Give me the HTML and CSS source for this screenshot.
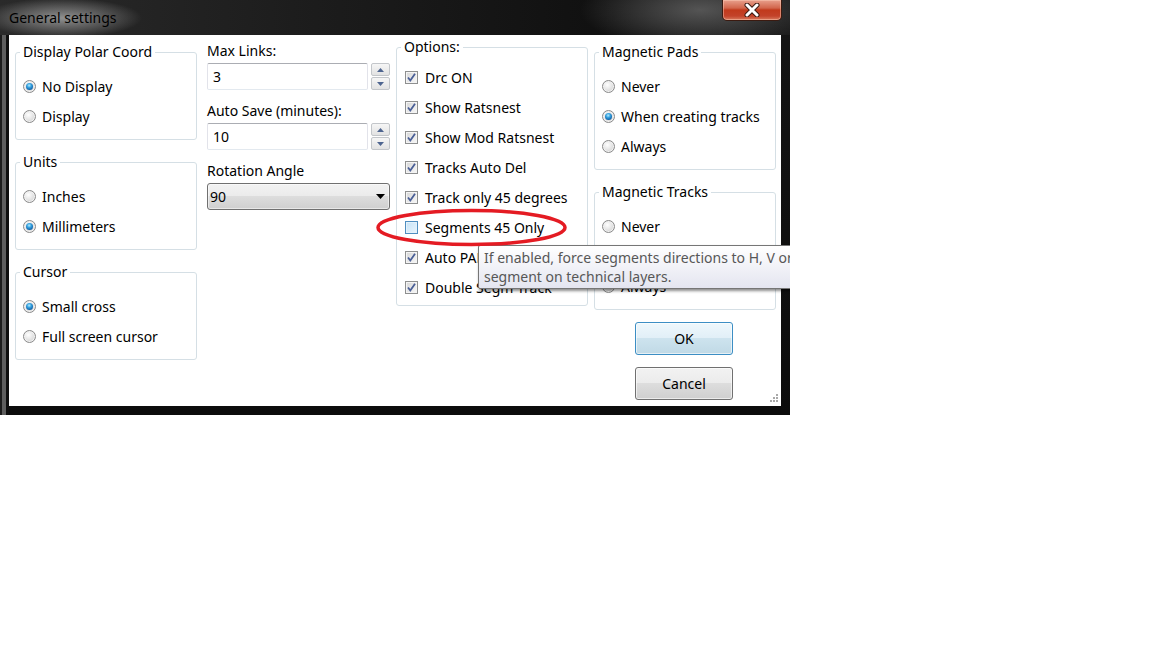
FILE: index.html
```html
<!DOCTYPE html>
<html>
<head>
<meta charset="utf-8">
<link rel="stylesheet" href="styles.css">
</head>
<body>
<div class="stage">
  <div class="window">
    <div class="titlebar">
      <span class="title">General settings</span>
      <div class="close">
        <svg width="20" height="14" viewBox="0 0 20 14"><path d="M5 2 L15 12 M15 2 L5 12" stroke="#3a1a12" stroke-width="5" stroke-linecap="round"/><path d="M5 2 L15 12 M15 2 L5 12" stroke="#fff" stroke-width="3" stroke-linecap="round"/></svg>
      </div>
    </div>
    <div class="client">
      <div class="col col1">
        <fieldset class="group">
          <legend>Display Polar Coord</legend>
          <div class="row"><span class="radio on"></span><span>No Display</span></div>
          <div class="row"><span class="radio"></span><span>Display</span></div>
        </fieldset>
        <fieldset class="group">
          <legend>Units</legend>
          <div class="row"><span class="radio"></span><span>Inches</span></div>
          <div class="row"><span class="radio on"></span><span>Millimeters</span></div>
        </fieldset>
        <fieldset class="group">
          <legend>Cursor</legend>
          <div class="row"><span class="radio on"></span><span>Small cross</span></div>
          <div class="row"><span class="radio"></span><span>Full screen cursor</span></div>
        </fieldset>
      </div>

      <div class="col col2">
        <div class="field">
          <div class="lbl">Max Links:</div>
          <div class="spinrow">
            <div class="input">3</div>
            <div class="spin">
              <div class="sb"><svg width="7" height="4" viewBox="0 0 7 4"><path d="M0 4 L3.5 0 L7 4Z" fill="#4e6590"/></svg></div>
              <div class="sb"><svg width="7" height="4" viewBox="0 0 7 4"><path d="M0 0 L3.5 4 L7 0Z" fill="#4e6590"/></svg></div>
            </div>
          </div>
        </div>
        <div class="field">
          <div class="lbl">Auto Save (minutes):</div>
          <div class="spinrow">
            <div class="input">10</div>
            <div class="spin">
              <div class="sb"><svg width="7" height="4" viewBox="0 0 7 4"><path d="M0 4 L3.5 0 L7 4Z" fill="#4e6590"/></svg></div>
              <div class="sb"><svg width="7" height="4" viewBox="0 0 7 4"><path d="M0 0 L3.5 4 L7 0Z" fill="#4e6590"/></svg></div>
            </div>
          </div>
        </div>
        <div class="field">
          <div class="lbl">Rotation Angle</div>
          <div class="select">
            <span>90</span>
            <svg width="9" height="5" viewBox="0 0 9 5"><path d="M0 0 L9 0 L4.5 5Z" fill="#000"/></svg>
          </div>
        </div>
      </div>

      <div class="col col3">
        <fieldset class="group opts">
          <legend>Options:</legend>
          <div class="row"><span class="check on"><svg width="11" height="11" viewBox="0 0 11 11"><path d="M2 5.5 L4.3 8.5 L9 1.8" stroke="#4a5f97" stroke-width="1.8" fill="none"/></svg></span><span>Drc ON</span></div>
          <div class="row"><span class="check on"><svg width="11" height="11" viewBox="0 0 11 11"><path d="M2 5.5 L4.3 8.5 L9 1.8" stroke="#4a5f97" stroke-width="1.8" fill="none"/></svg></span><span>Show Ratsnest</span></div>
          <div class="row"><span class="check on"><svg width="11" height="11" viewBox="0 0 11 11"><path d="M2 5.5 L4.3 8.5 L9 1.8" stroke="#4a5f97" stroke-width="1.8" fill="none"/></svg></span><span>Show Mod Ratsnest</span></div>
          <div class="row"><span class="check on"><svg width="11" height="11" viewBox="0 0 11 11"><path d="M2 5.5 L4.3 8.5 L9 1.8" stroke="#4a5f97" stroke-width="1.8" fill="none"/></svg></span><span>Tracks Auto Del</span></div>
          <div class="row"><span class="check on"><svg width="11" height="11" viewBox="0 0 11 11"><path d="M2 5.5 L4.3 8.5 L9 1.8" stroke="#4a5f97" stroke-width="1.8" fill="none"/></svg></span><span>Track only 45 degrees</span></div>
          <div class="row"><span class="check hover"></span><span>Segments 45 Only</span></div>
          <div class="row"><span class="check on"><svg width="11" height="11" viewBox="0 0 11 11"><path d="M2 5.5 L4.3 8.5 L9 1.8" stroke="#4a5f97" stroke-width="1.8" fill="none"/></svg></span><span>Auto PAN</span></div>
          <div class="row"><span class="check on"><svg width="11" height="11" viewBox="0 0 11 11"><path d="M2 5.5 L4.3 8.5 L9 1.8" stroke="#4a5f97" stroke-width="1.8" fill="none"/></svg></span><span>Double Segm Track</span></div>
        </fieldset>
      </div>

      <div class="col col4">
        <fieldset class="group">
          <legend>Magnetic Pads</legend>
          <div class="row"><span class="radio"></span><span>Never</span></div>
          <div class="row"><span class="radio on"></span><span>When creating tracks</span></div>
          <div class="row"><span class="radio"></span><span>Always</span></div>
        </fieldset>
        <fieldset class="group">
          <legend>Magnetic Tracks</legend>
          <div class="row"><span class="radio"></span><span>Never</span></div>
          <div class="row"><span class="radio on"></span><span>When creating tracks</span></div>
          <div class="row"><span class="radio"></span><span>Always</span></div>
        </fieldset>
        <div class="buttons">
          <div class="btn default">OK</div>
          <div class="btn">Cancel</div>
        </div>
      </div>

      <svg class="grip" width="9" height="9" viewBox="0 0 9 9">
        <rect x="7" y="1" width="2" height="2" fill="#a9a9a9"/>
        <rect x="4" y="4" width="2" height="2" fill="#a9a9a9"/>
        <rect x="7" y="4" width="2" height="2" fill="#a9a9a9"/>
        <rect x="1" y="7" width="2" height="2" fill="#a9a9a9"/>
        <rect x="4" y="7" width="2" height="2" fill="#a9a9a9"/>
        <rect x="7" y="7" width="2" height="2" fill="#a9a9a9"/>
      </svg>
    </div>
  </div>

  <div class="tooltip">If enabled, force segments directions to H, V or 45 degrees, when creating a<br>segment on technical layers.</div>

  <svg class="mark" width="200" height="44" viewBox="0 0 200 44">
    <ellipse cx="97.5" cy="21.5" rx="93.5" ry="17" fill="none" stroke="#e41b23" stroke-width="3.5"/>
  </svg>
</div>
</body>
</html>
```

FILE: styles.css
```css
* { box-sizing: border-box; }

body {
  margin: 0;
  background: #fff;
  font-family: "Noto Sans", "Open Sans", sans-serif;
  font-size: 14px;
  color: #000;
}

.stage {
  position: relative;
  width: 790px;
  height: 415px;
  overflow: hidden;
}

.window {
  width: 790px;
  height: 415px;
  display: flex;
  flex-direction: column;
  padding: 0 9px 9px 9px;
  background:
    linear-gradient(90deg, #1c1c1c 0 2px, #5e5e5e 2px 6px, #0e0e0e 6px 9px, transparent 9px),
    linear-gradient(#151515, #0c0c0c);
}

.titlebar {
  height: 35px;
  display: flex;
  justify-content: space-between;
  align-items: flex-start;
  margin: 0 -9px;
  padding: 0 8px 0 9px;
  background:
    radial-gradient(ellipse 80px 20px at 62px 18px, rgba(150,150,150,.95), rgba(120,120,120,0)),
    radial-gradient(ellipse 120px 40px at 700px 10px, rgba(100,100,100,.8), rgba(60,60,60,0)),
    linear-gradient(90deg, #2a2a2a 0, #1c1c1c 40%, #111 75%, #1a1a1a 100%);
}

.title {
  padding-top: 9px;
  line-height: 18px;
  color: #000;
}

.close {
  width: 60px;
  height: 21px;
  margin-top: 0;
  border: 1px solid #3b1a10;
  border-top: none;
  border-radius: 0 0 5px 5px;
  background: linear-gradient(#e8a08c 0%, #d2664c 40%, #c13a1c 50%, #c3432a 80%, #d97a5e 100%);
  box-shadow: inset 0 0 0 1px rgba(255,210,190,.45);
  display: flex;
  align-items: center;
  justify-content: center;
}

.client {
  flex: 1;
  background: #fff;
  display: flex;
  align-items: flex-start;
  padding: 0 5px 0 6px;
  position: relative;
}

.col { display: flex; flex-direction: column; }
.col1 { width: 182px; padding-top: 8px; gap: 13px; }
.col2 { width: 183px; margin-left: 10px; padding-top: 7px; gap: 12px; }
.col3 { width: 192px; margin-left: 6px; padding-top: 3px; }
.col4 { width: 182px; margin-left: 6px; padding-top: 8px; gap: 13px; }

.group {
  margin: 0;
  min-width: 0;
  border: 1px solid #d5dfe5;
  border-radius: 3px;
  padding: 10px 6px 8px 7px;
}

.group legend {
  padding: 0 3px;
  margin-left: -3px;
  line-height: 18px;
}

.group.opts { padding: 6px 6px 3px 8px; }
.group.opts legend { margin-left: -4px; }

.row {
  height: 30px;
  display: flex;
  align-items: center;
  gap: 6px;
  white-space: nowrap;
}

.radio {
  width: 13px;
  height: 13px;
  flex: none;
  border-radius: 50%;
  border: 1px solid #8a8a8a;
  background: radial-gradient(circle at 40% 35%, #ffffff 0, #e6e6e6 45%, #c6c6c6 100%);
  box-shadow: inset 0 0 0 1px #f2f2f2;
  display: flex;
  align-items: center;
  justify-content: center;
}

.radio.on::after {
  content: "";
  width: 7px;
  height: 7px;
  border-radius: 50%;
  background: radial-gradient(circle at 45% 35%, #b5ecff 0, #37a3e0 35%, #0d5ea6 75%, #0b3f78 100%);
}

.check {
  width: 13px;
  height: 13px;
  flex: none;
  border: 1px solid #8e8f8f;
  background: linear-gradient(135deg, #d6d6d6, #f8f8f8);
  box-shadow: inset 0 0 0 1px #f4f4f4;
  display: flex;
  align-items: center;
  justify-content: center;
}

.check.hover {
  border-color: #4f8ec0;
  background: linear-gradient(135deg, #c6e2f6, #e8f5fd);
  box-shadow: inset 0 0 0 1px #e4f2fb;
}

.opts .row { gap: 7px; }

.lbl {
  line-height: 18px;
  margin-bottom: 3px;
  white-space: nowrap;
}

.spinrow {
  display: flex;
  gap: 3px;
}

.input {
  width: 161px;
  height: 27px;
  border: 1px solid #e2e3ea;
  border-top-color: #abadb3;
  border-bottom-color: #e3e9ef;
  border-radius: 2px;
  padding-left: 5px;
  line-height: 25px;
}

.spin {
  width: 19px;
  display: flex;
  flex-direction: column;
  gap: 1px;
}

.sb {
  height: 13px;
  border: 1px solid #c3c6ca;
  border-radius: 2px;
  background: linear-gradient(#f6f6f6, #e2e2e2);
  display: flex;
  align-items: center;
  justify-content: center;
}

.select {
  width: 183px;
  height: 27px;
  border: 1px solid #707070;
  border-radius: 3px;
  background: linear-gradient(#f2f2f2 0%, #ebebeb 49%, #dddddd 50%, #cfcfcf 100%);
  box-shadow: inset 0 0 0 1px rgba(255,255,255,.5);
  display: flex;
  align-items: center;
  justify-content: space-between;
  padding: 0 4px 0 2px;
}

.buttons {
  margin-top: -1px;
  display: flex;
  flex-direction: column;
  align-items: center;
  gap: 12px;
  padding-right: 2px;
}

.btn {
  width: 98px;
  height: 33px;
  border: 1px solid #707070;
  border-radius: 3px;
  background: linear-gradient(#f2f2f2 0%, #ebebeb 49%, #dddddd 50%, #cfcfcf 100%);
  box-shadow: inset 0 0 0 1px rgba(255,255,255,.6);
  display: flex;
  align-items: center;
  justify-content: center;
}

.btn.default {
  border-color: #3c8ec4;
  background: linear-gradient(#eef7fc 0%, #e1eff7 49%, #cde3ee 50%, #c0d9e6 100%);
  box-shadow: inset 0 0 0 1px rgba(255,255,255,.6);
}

.grip {
  position: absolute;
  right: 3px;
  bottom: 4px;
}

.tooltip {
  position: absolute;
  left: 478px;
  top: 245px;
  width: 420px;
  height: 44px;
  border: 1px solid #767676;
  border-radius: 2px;
  background: linear-gradient(#ffffff, #e4e5f0);
  box-shadow: 1px 2px 3px rgba(0,0,0,.45);
  color: #575757;
  padding: 2px 5px;
  line-height: 19px;
  white-space: nowrap;
}

.mark {
  position: absolute;
  left: 374px;
  top: 206px;
}
```
